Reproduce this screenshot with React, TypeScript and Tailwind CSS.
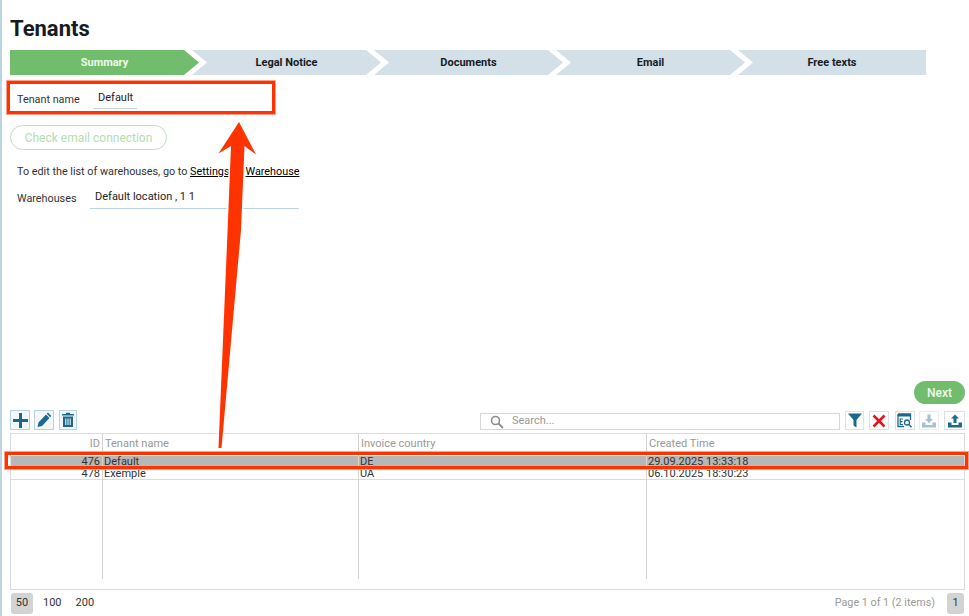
const FONT = "font-['Roboto','Liberation_Sans',sans-serif]";

const steps = ["Summary", "Legal Notice", "Documents", "Email", "Free texts"];

const ICON_BLUE = "#1b6a8e";

function ToolButton({ children, className }: { children: React.ReactNode; className: string }) {
  return <button className={`flex items-center justify-center border ${className}`}>{children}</button>;
}

const LEFT_BTN = "h-[20px] border-[#b9d3df] bg-[#f4f7f8]";
const RIGHT_BTN = "h-[19px] border-[#d9e3e8] bg-white";

function PlusIcon() {
  return (
    <svg width="17" height="17" viewBox="0 0 17 17">
      <path d="M7 1h3v6h6v3h-6v6H7v-6H1V7h6z" fill={ICON_BLUE} />
    </svg>
  );
}

function PencilIcon() {
  return (
    <svg width="16" height="16" viewBox="0 0 16 16">
      <path d="M1.500 15l1-4.500 7.500-8 3.500 3.500-7.500 8zM10.800 1.700l1-1.200 3.500 3.500-1.100 1.200z" fill={ICON_BLUE} />
    </svg>
  );
}

function TrashIcon() {
  return (
    <svg width="14" height="16" viewBox="0 0 14 16">
      <path d="M5 .8h4v1.200h4v1.600H1V2h4zM2 4.600h10V15H2z" fill={ICON_BLUE} />
      <path d="M4.800 6.500v6.500M7 6.500v6.500M9.200 6.500v6.500" stroke="#fff" strokeWidth="1" />
    </svg>
  );
}

function FilterIcon() {
  return (
    <svg width="14" height="15" viewBox="0 0 14 15">
      <path d="M0 .5h14L8.500 7v7.500L5.500 12.500V7z" fill={ICON_BLUE} />
    </svg>
  );
}

function CrossIcon() {
  return (
    <svg width="14" height="14" viewBox="0 0 14 14">
      <path d="M1.500 1.500l11 11M12.500 1.500l-11 11" stroke="#e8141c" strokeWidth="2.600" />
    </svg>
  );
}

function SearchExportIcon() {
  return (
    <svg width="16" height="15" viewBox="0 0 16 15">
      <path d="M1 1h12.500v6M1 1v12.500h6" fill="none" stroke={ICON_BLUE} strokeWidth="1.300" />
      <path d="M1 1h12.500v2.500H1z" fill={ICON_BLUE} />
      <path d="M6 6H3.200v5.500H6M3.200 8.700H5.500" fill="none" stroke={ICON_BLUE} strokeWidth="1.200" />
      <circle cx="10" cy="9.500" r="2.500" fill="none" stroke={ICON_BLUE} strokeWidth="1.300" />
      <path d="M12 11.500l2.500 2.700" stroke={ICON_BLUE} strokeWidth="1.500" />
    </svg>
  );
}

function TrayIcon({ up, color }: { up?: boolean; color: string }) {
  return (
    <svg width="16" height="14" viewBox="0 0 16 14">
      <path d={up ? "M8 .5l4 4H9.500V9h-3V4.500H4z" : "M6.500 .5h3V5H12L8 9 4 5h2.500z"} fill={color} />
      <path d="M1 8.500h3.500v2.500h7V8.500H15V13.500H1z" fill={color} />
    </svg>
  );
}

export default function App() {
  return (
    <div className={`${FONT} relative flex h-[616px] w-[969px] flex-col overflow-hidden border-l-2 border-[#bcd5e2] bg-white pl-[8px] pr-[4px] text-[#222]`}>
      <h1 className="mt-[15px] text-[22px] font-bold leading-[28px] text-[#161c22]">Tenants</h1>

      <div className="mt-[7px] flex h-[25px] w-[916px]">
        {steps.map((step, i) => (
          <div
            key={step}
            className={
              i === 0
                ? "flex h-full w-[189px] items-center justify-center bg-[#71bd6d] pt-[2px] text-[11px] font-bold text-[#eef8ec] [clip-path:polygon(0_0,174px_0,100%_50%,174px_100%,0_100%)]"
                : i === 4
                  ? "-ml-[7px] flex h-full w-[188px] items-center justify-center bg-[#d4e0e8] pt-[2px] text-[11px] font-bold text-[#161c22] [clip-path:polygon(0_0,100%_0,100%_100%,0_100%,15px_50%)]"
                  : "-ml-[7px] flex h-full w-[189px] items-center justify-center bg-[#d4e0e8] pt-[2px] text-[11px] font-bold text-[#161c22] [clip-path:polygon(0_0,174px_0,100%_50%,174px_100%,0_100%,15px_50%)]"
            }
          >
            {step}
          </div>
        ))}
      </div>

      <div className="mt-[13px] flex h-[22px] items-center pl-[7px] text-[11px]">
        <span className="mt-[3px] w-[76px] text-[10.8px] text-[#333]">Tenant name</span>
        <span className="w-[44px] border-b border-[#bcd3de] pb-[3px] pl-[5px] leading-[15px]">Default</span>
      </div>

      <button className="mt-[15px] h-[25px] w-[157px] rounded-full border border-[#bfe0bd] text-[12px] text-[#b5dcb3]">
        Check email connection
      </button>

      <p className="mt-[15px] pl-[7px] text-[10.8px] leading-[14px] text-[#333]">
        To edit the list of warehouses, go to <span className="text-black underline">Settings</span> &gt;{" "}
        <span className="ml-[5px] text-black underline">Warehouse</span>
      </p>

      <div className="mt-[9px] flex items-start pl-[7px] text-[11px]">
        <span className="mt-[3px] w-[73px] text-[10.8px] text-[#333]">Warehouses</span>
        <span className="h-[21px] w-[209px] border-b border-[#bcd3de] pl-[5px] pt-[1px] leading-[15px]">Default location , 1 1</span>
      </div>

      <div className="flex flex-1 justify-end pt-[172px]">
        <button className="h-[23px] w-[51px] rounded-full bg-[#71bd6d] text-[12px] font-medium text-[#eef8ec]">Next</button>
      </div>

      <div className="flex h-[20px] items-end justify-between">
        <div className="flex">
          <ToolButton className={`${LEFT_BTN} w-[20px]`}><PlusIcon /></ToolButton>
          <ToolButton className={`${LEFT_BTN} ml-[4px] w-[20px]`}><PencilIcon /></ToolButton>
          <ToolButton className={`${LEFT_BTN} ml-[5px] w-[18px]`}><TrashIcon /></ToolButton>
        </div>
        <div className="flex items-end">
          <div className="flex h-[17px] w-[360px] items-center border border-[#d8d8d8] pl-[9px] text-[11px] text-[#999]">
            <svg width="14" height="14" viewBox="0 0 14 14" className="mr-[8px]">
              <circle cx="5.500" cy="5.500" r="4" fill="none" stroke="#8d8d8d" strokeWidth="1.600" />
              <path d="M8.500 8.500l4.500 4.500" stroke="#8d8d8d" strokeWidth="1.800" />
            </svg>
            Search...
          </div>
          <ToolButton className={`${RIGHT_BTN} ml-[5px] w-[19px]`}><FilterIcon /></ToolButton>
          <ToolButton className={`${RIGHT_BTN} ml-[5px] w-[20px]`}><CrossIcon /></ToolButton>
          <ToolButton className={`${RIGHT_BTN} ml-[6px] w-[20px]`}><SearchExportIcon /></ToolButton>
          <ToolButton className={`${RIGHT_BTN} ml-[4px] w-[20px] border-[#e8eef1]`}><TrayIcon color="#9fc3d4" /></ToolButton>
          <ToolButton className={`${RIGHT_BTN} ml-[5px] w-[21px]`}><TrayIcon up color={ICON_BLUE} /></ToolButton>
        </div>
      </div>

      <div className="mt-[3px] h-[157px] w-[955px] border border-[#dcdcdc] text-[11px] leading-[12px]">
        <div className="grid h-[145px] grid-cols-[92px_256px_288px_1fr]">
          <div className="border-r border-[#d4d4d4]">
            <div className="h-[22px] pr-[2px] pt-[4px] text-right text-[#999]">ID</div>
            <div className="h-[12px] bg-[#b5b8b6] pr-[2px] text-right text-[#333]">476</div>
            <div className="h-[12px] border-b border-[#dcdcdc] pr-[2px] text-right text-[#333]">478</div>
          </div>
          <div className="border-r border-[#d4d4d4]">
            <div className="h-[22px] pl-[2px] pt-[4px] text-[#999]">Tenant name</div>
            <div className="h-[12px] bg-[#b5b8b6] pl-[1px] text-[#333]">Default</div>
            <div className="h-[12px] border-b border-[#dcdcdc] pl-[1px] text-[#333]">Exemple</div>
          </div>
          <div className="border-r border-[#d4d4d4]">
            <div className="h-[22px] pl-[2px] pt-[4px] text-[#999]">Invoice country</div>
            <div className="h-[12px] bg-[#b5b8b6] pl-[1px] text-[#333]">DE</div>
            <div className="h-[12px] border-b border-[#dcdcdc] pl-[1px] text-[#333]">UA</div>
          </div>
          <div>
            <div className="h-[22px] pl-[2px] pt-[4px] text-[#999]">Created Time</div>
            <div className="h-[12px] bg-[#b5b8b6] pl-[1px] text-[#333]">29.09.2025 13:33:18</div>
            <div className="h-[12px] border-b border-[#dcdcdc] pl-[1px] text-[#333]">06.10.2025 18:30:23</div>
          </div>
        </div>
      </div>

      <div className="mb-[2px] mt-[2px] flex h-[22px] items-center justify-between text-[11px]">
        <div className="ml-[1px] flex items-center text-[#333]">
          <span className="flex h-[21px] w-[22px] items-center justify-center rounded-[3px] bg-[#d3d3d3]">50</span>
          <span className="ml-[10px]">100</span>
          <span className="ml-[14px]">200</span>
        </div>
        <div className="mr-[1px] flex items-center text-[10.8px] text-[#999]">
          <span>Page 1 of 1 (2 items)</span>
          <span className="ml-[12px] flex h-[21px] w-[17px] items-center justify-center rounded-[3px] bg-[#d3d3d3] text-[#333]">1</span>
        </div>
      </div>

      {/* annotations drawn over the page */}
      <div className="absolute left-[5px] top-[81px] h-[33px] w-[268px] border-[3px] border-[#ff3300] outline outline-[#ffa08a]" />
      <div className="absolute left-[3px] top-[452px] h-[17px] w-[963px] border-[3px] border-[#ff3300] outline outline-[#ffa08a]" />
      <svg className="absolute -left-[2px] top-0" width="969" height="616" viewBox="0 0 969 616">
        <path
          d="M239 122L256 154.500L244.500 146L241 230L221.500 448L218.500 448L228 220L231 146L218.500 153.500Z"
          fill="#ff3300"
          stroke="#fff"
          strokeWidth="3"
          strokeLinejoin="round"
          paintOrder="stroke"
        />
      </svg>
    </div>
  );
}
